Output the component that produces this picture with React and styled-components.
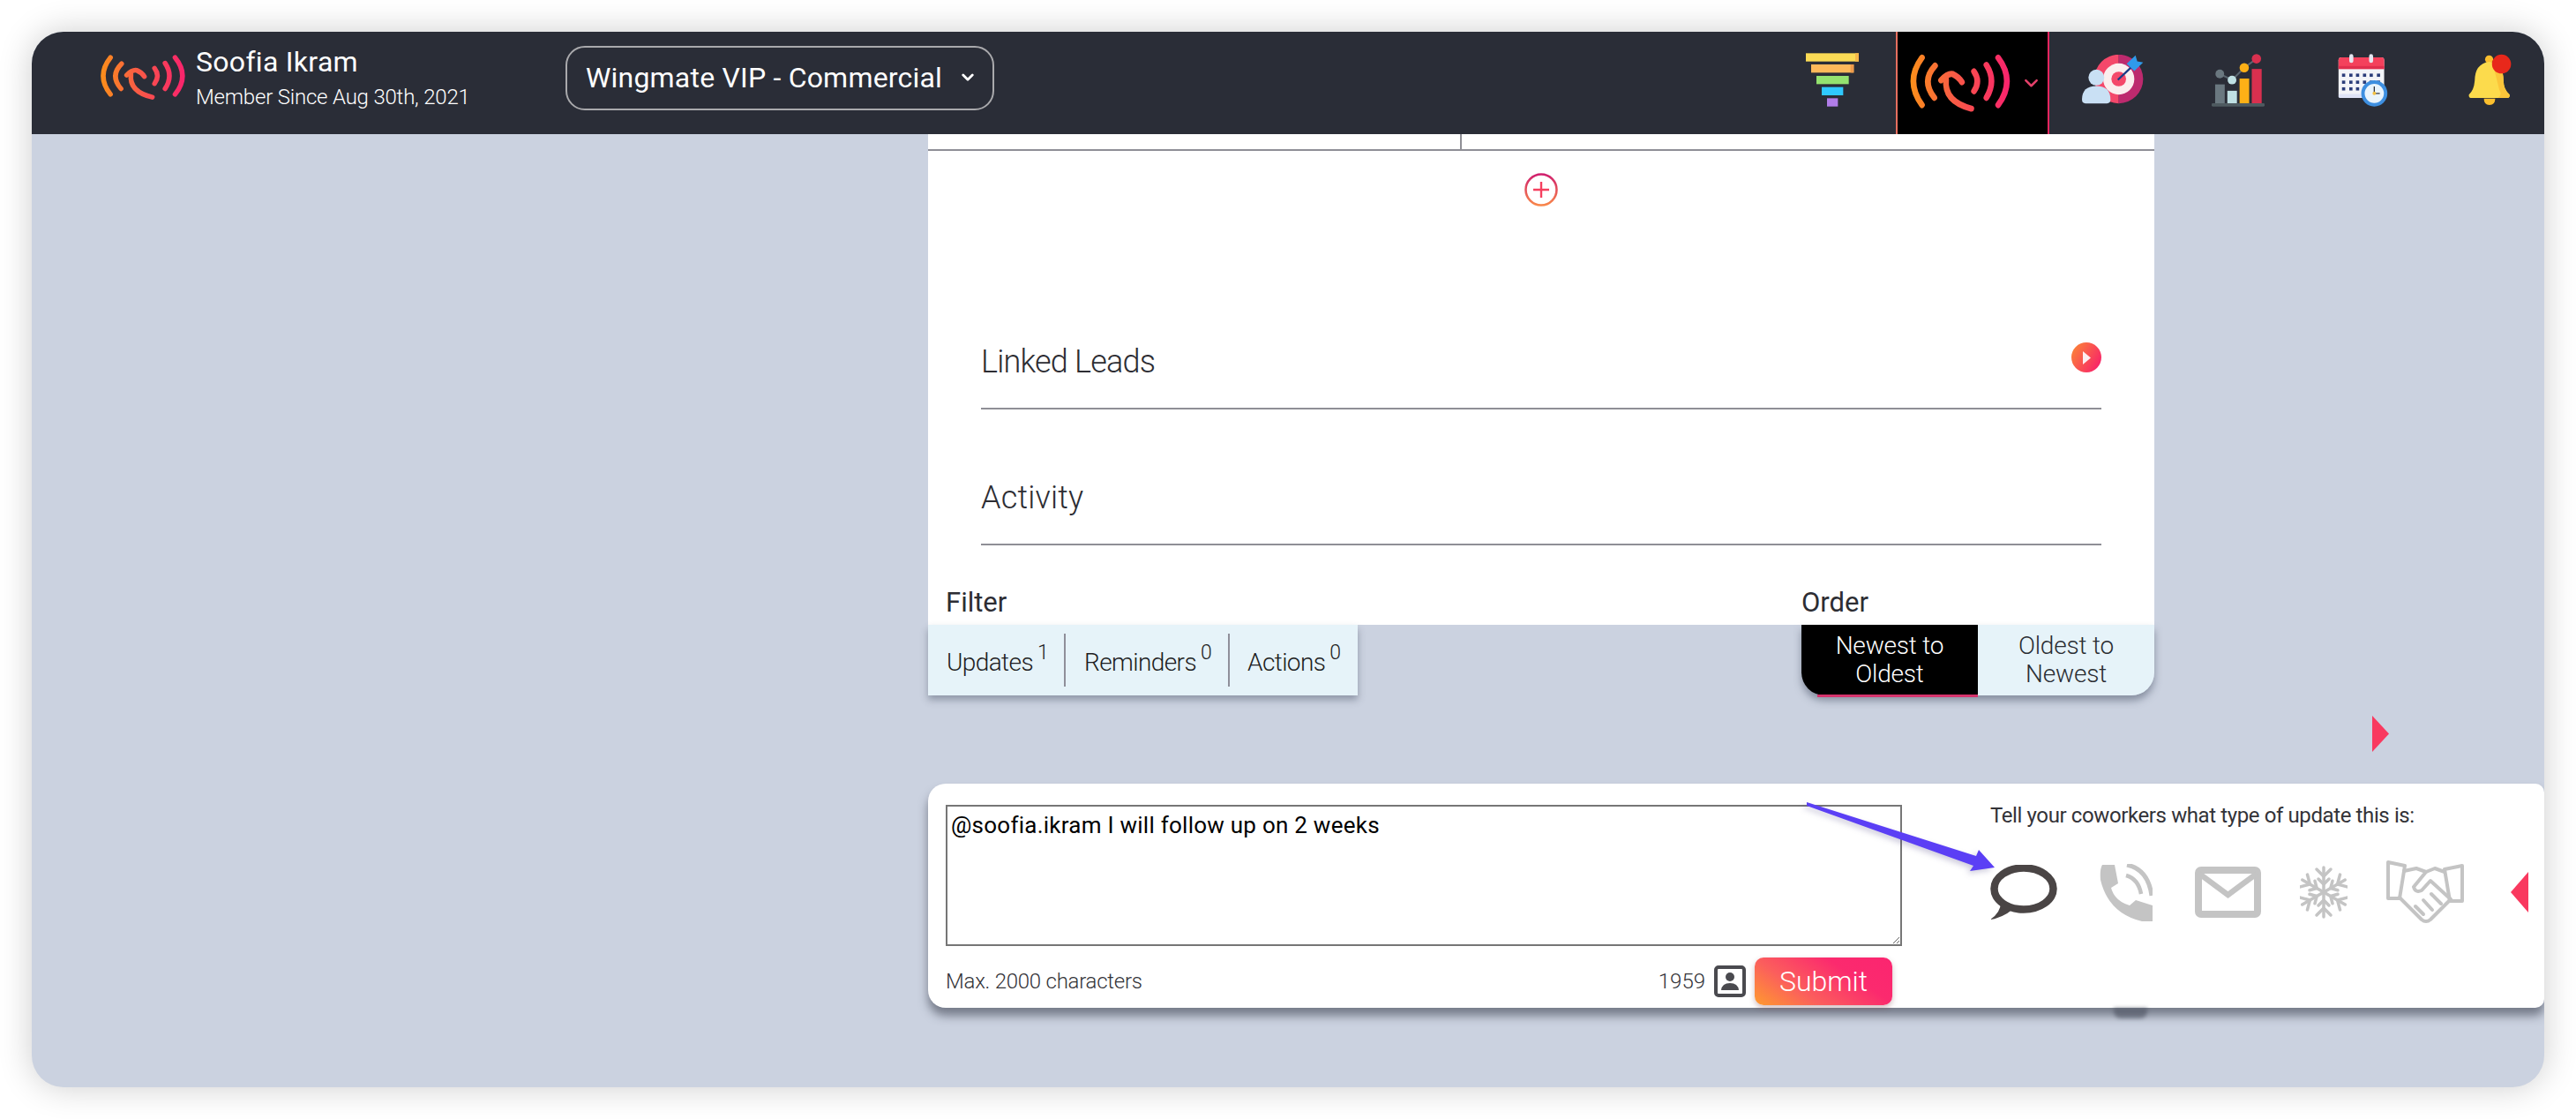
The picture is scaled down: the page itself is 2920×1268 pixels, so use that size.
import React from "react";
import styled, { createGlobalStyle } from "styled-components";

const GlobalStyle = createGlobalStyle`
  html, body {
    margin: 0;
    padding: 0;
    background: #ffffff;
    font-family: Roboto, "Liberation Sans", sans-serif;
  }
  * {
    box-sizing: border-box;
  }
`;

const Page = styled.div`
  padding: 36px;
  height: 1268px;
  overflow: hidden;
`;

const AppWindow = styled.div`
  position: relative;
  height: 1196px;
  border-radius: 36px;
  overflow: hidden;
  background: #cbd2e0;
  box-shadow: 0 0 38px rgba(0, 0, 0, 0.2);
`;

const Header = styled.header`
  display: flex;
  align-items: center;
  height: 116px;
  padding-left: 76px;
  padding-right: 37px;
  background: #2a2d37;
  color: #ffffff;
`;

const Identity = styled.div`
  display: flex;
  align-items: center;
  gap: 10px;
  width: 529px;
  padding-bottom: 14px;
`;

const UserName = styled.div`
  font-size: 32px;
  line-height: 38px;
  letter-spacing: 0.3px;
`;

const MemberSince = styled.div`
  margin-top: 7px;
  font-size: 24px;
  line-height: 28px;
  font-weight: 300;
  letter-spacing: -0.2px;
`;

const WorkspaceSelect = styled.div`
  display: flex;
  align-items: center;
  justify-content: space-between;
  width: 486px;
  height: 73px;
  margin-top: -12px;
  padding: 0 21px;
  border: 2px solid #a9a9ac;
  border-radius: 22px;
  font-size: 32px;
  letter-spacing: 0.2px;
`;

const Nav = styled.nav`
  display: flex;
  align-items: center;
  align-self: stretch;
  margin-left: auto;
`;

const NavIcon = styled.div`
  display: flex;
  margin-left: ${(p) => p.$gap}px;
  margin-top: ${(p) => p.$top || -7}px;
`;

const ActiveNav = styled.div`
  display: flex;
  align-items: center;
  align-self: stretch;
  width: 174px;
  margin-left: 42px;
  padding-left: 12px;
  gap: 13px;
  background: #000000;
  border-left: 2px solid #e76f5f;
  border-right: 2px solid #e5265f;
`;

const Main = styled.main`
  padding-left: 1016px;
`;

const Column = styled.div`
  width: 1390px;
`;

const WhiteSheet = styled.div`
  background: #ffffff;
  height: 556px;
`;

const TableStub = styled.div`
  display: grid;
  grid-template-columns: 605px 1fr;
  height: 19px;
  border-bottom: 2px solid #8f8f96;
`;

const StubCell = styled.div`
  border-right: 2px solid #8f8f96;
`;

const AddRow = styled.div`
  display: flex;
  justify-content: center;
  height: 139px;
  padding-top: 25px;
`;

const Section = styled.section`
  display: flex;
  align-items: flex-end;
  justify-content: space-between;
  height: 154px;
  margin: 0 60px;
  padding-bottom: 30px;
  border-bottom: 2px solid #8f8f96;
`;

const SectionTitle = styled.h2`
  margin: 0;
  font-size: 36px;
  line-height: 44px;
  font-weight: 300;
  letter-spacing: ${(p) => p.$spacing || 0}px;
  color: #2d2d33;
`;

const PlayButton = styled.div`
  display: flex;
  margin-bottom: 10px;
  width: 34px;
  height: 34px;
`;

const LabelRow = styled.div`
  display: flex;
  align-items: flex-end;
  justify-content: space-between;
  height: 88px;
  padding: 0 0 5px 20px;
`;

const Label = styled.div`
  width: ${(p) => p.$width || "auto"};
  font-size: 31px;
  line-height: 36px;
  color: #2d2d33;
`;

const TabsRow = styled.div`
  display: flex;
  justify-content: space-between;
`;

const FilterTabs = styled.div`
  display: flex;
  box-shadow: 0 5px 8px rgba(70, 80, 100, 0.45);
`;

const FilterTab = styled.div`
  position: relative;
  width: ${(p) => p.$width}px;
  height: 80px;
  padding: 23px 0 0 ${(p) => p.$pad}px;
  background: #e6f3f9;
  font-size: 28px;
  line-height: 40px;
  font-weight: 300;
  letter-spacing: -0.6px;
  color: #1d1d22;
  white-space: nowrap;

  &:not(:first-child)::before {
    content: "";
    position: absolute;
    left: -1px;
    top: 10px;
    bottom: 10px;
    width: 2px;
    background: #8f8f9a;
  }
`;

const Count = styled.sup`
  position: relative;
  top: -3px;
  margin-left: 5px;
  font-size: 23px;
  line-height: 0;
  vertical-align: super;
`;

const OrderTabs = styled.div`
  display: flex;
  width: 400px;
  height: 80px;
  border-radius: 0 0 26px 26px;
  box-shadow: 0 6px 8px rgba(70, 80, 100, 0.5);
`;

const OrderTab = styled.div`
  position: relative;
  display: flex;
  align-items: center;
  justify-content: center;
  width: 200px;
  padding: 0 30px;
  text-align: center;
  font-size: 28px;
  line-height: 32px;
  font-weight: 300;
  letter-spacing: -0.2px;
  background: ${(p) => (p.$active ? "#000000" : "#e6f3f9")};
  color: ${(p) => (p.$active ? "#ffffff" : "#2a2d33")};
  border-radius: ${(p) => (p.$active ? "0 0 0 26px" : "0 0 26px 0")};

  ${(p) =>
    p.$active &&
    `
    &::after {
      content: "";
      position: absolute;
      left: 18px;
      right: 0;
      bottom: -2px;
      height: 3px;
      background: #d6336c;
    }
  `}
`;

const PagerRow = styled.div`
  display: flex;
  justify-content: flex-end;
  margin-top: 23px;
  padding-right: 176px;
`;

const Triangle = styled.div`
  width: ${(p) => (p.$left ? 20 : 19)}px;
  height: ${(p) => (p.$left ? 46 : 41)}px;
  background: #f9395f;
  clip-path: ${(p) =>
    p.$left
      ? "polygon(100% 0, 100% 100%, 0 50%)"
      : "polygon(0 0, 100% 50%, 0 100%)"};
`;

const Composer = styled.div`
  position: relative;
  display: flex;
  height: 254px;
  margin-top: 36px;
  padding: 24px 16px 0 20px;
  background: #ffffff;
  border-radius: 20px 10px 10px 20px;
  box-shadow: 0 9px 11px rgba(60, 65, 80, 0.6);

  &::after {
    content: "";
    position: absolute;
    left: 1344px;
    bottom: -12px;
    width: 38px;
    height: 12px;
    background: rgba(70, 75, 90, 0.55);
    filter: blur(2px);
    border-radius: 0 0 8px 8px;
  }
`;

const EditorColumn = styled.div`
  display: flex;
  flex-direction: column;
  width: 1084px;
`;

const Editor = styled.textarea`
  display: block;
  width: 100%;
  height: 160px;
  padding: 5px 4px;
  border: 2px solid #767676;
  outline: none;
  resize: both;
  font-family: Roboto, "Liberation Sans", sans-serif;
  font-size: 26px;
  line-height: 32px;
  letter-spacing: 0.25px;
  color: #000000;
  background: #ffffff;
`;

const EditorFooter = styled.div`
  display: flex;
  align-items: center;
  margin-top: 12px;
  height: 56px;
  padding-right: 11px;
`;

const Hint = styled.span`
  font-size: 24px;
  font-weight: 300;
  letter-spacing: -0.25px;
  color: #333338;
`;

const Counter = styled.span`
  margin-left: auto;
  margin-right: 10px;
  font-size: 24px;
  font-weight: 300;
  color: #333338;
`;

const SubmitButton = styled.button`
  width: 156px;
  height: 54px;
  margin-left: 10px;
  border: 0;
  border-radius: 10px;
  background: linear-gradient(35deg, #ff9a2e 0%, #fb5f5c 32%, #fb2a6e 68%, #fb2570 100%);
  box-shadow: 0 3px 6px rgba(120, 60, 70, 0.35);
  color: #ffffff;
  font-family: Roboto, "Liberation Sans", sans-serif;
  font-size: 32px;
  font-weight: 300;
`;

const TypeColumn = styled.div`
  flex: 1;
  padding-left: 100px;
`;

const TypeHeading = styled.div`
  margin-top: -2px;
  font-size: 24px;
  line-height: 28px;
  letter-spacing: -0.39px;
  color: #333338;
`;

const TypeIcons = styled.div`
  display: flex;
  align-items: center;
  height: 72px;
  margin-top: 37px;
`;

const TypeIcon = styled.div`
  display: flex;
  margin-left: ${(p) => p.$gap}px;
  color: ${(p) => (p.$active ? "#4a4545" : "#c4c4c4")};
`;

const Annotation = styled.svg`
  position: absolute;
  left: 2012px;
  top: 875px;
  overflow: visible;
  filter: drop-shadow(-3px 3px 3px rgba(60, 50, 120, 0.25));
`;

function SignalLogo({ id, width, height }) {
  return (
    <svg width={width} height={height} viewBox="62 75 310 165" preserveAspectRatio="none" fill="none" strokeWidth="17" strokeLinecap="round">
      <defs>
        <linearGradient id={id} gradientUnits="userSpaceOnUse" x1="62" y1="0" x2="372" y2="0">
          <stop offset="0" stopColor="#fb9218" />
          <stop offset="0.4" stopColor="#f95f42" />
          <stop offset="1" stopColor="#f9206f" />
        </linearGradient>
      </defs>
      <g stroke={`url(#${id})`}>
        <path d="M103 88 Q52 152 103 218" />
        <path d="M142 110 Q100 152 140 198" />
        <path d="M160 150 Q180 130 195 133 Q212 140 222 155" />
        <path d="M175 148 Q168 208 250 228" />
        <path d="M258 126 Q278 152 258 180" />
        <path d="M295 108 Q325 152 295 198" />
        <path d="M330 88 Q382 152 330 218" />
      </g>
    </svg>
  );
}

function Chevron({ color, width, height, strokeWidth }) {
  return (
    <svg width={width} height={height} viewBox="0 0 12 8" fill="none" stroke={color} strokeWidth={strokeWidth} strokeLinecap="round" strokeLinejoin="round">
      <path d="M1.5 1.5 L6 6 L10.5 1.5" />
    </svg>
  );
}

function FunnelIcon() {
  return (
    <svg width="60" height="61" viewBox="50 110 180 181">
      <rect x="50" y="110" width="180" height="28" fill="#fbdb55" />
      <rect x="218" y="110" width="12" height="28" fill="#f7b84a" />
      <rect x="68" y="148" width="145" height="28" fill="#fdb95a" />
      <rect x="202" y="148" width="11" height="28" fill="#ee9a4c" />
      <rect x="86" y="187" width="110" height="28" fill="#94e26f" />
      <rect x="104" y="225" width="73" height="28" fill="#2fc8ff" />
      <rect x="122" y="263" width="37" height="28" fill="#b17de8" />
    </svg>
  );
}

function TargetIcon() {
  return (
    <svg width="70" height="57" viewBox="990 120 210 170">
      <path d="M1115 119 A83 83 0 0 0 1115 285 Z" fill="#f4486a" />
      <path d="M1115 119 A83 83 0 0 1 1115 285 Z" fill="#bd2a6e" />
      <circle cx="1115" cy="202" r="53" fill="#fbeeee" />
      <circle cx="1115" cy="202" r="25" fill="#f4486a" />
      <path d="M1112 205 L1165 155" stroke="#173a86" strokeWidth="7" />
      <path d="M1142 150 L1172 122 L1178 142 L1198 146 L1168 175 Z" fill="#2f9aea" />
      <circle cx="1039" cy="197" r="27" fill="#c9e0f4" />
      <path d="M990 272 Q990 226 1039 226 Q1087 226 1087 272 Q1087 285 1075 285 L1002 285 Q990 285 990 272 Z" fill="#c9e0f4" />
    </svg>
  );
}

function ChartIcon() {
  return (
    <svg width="60" height="60" viewBox="170 80 182 182">
      <path d="M198 149 L240 170 L282 128 L324 97" stroke="#5a6670" strokeWidth="6" fill="none" />
      <rect x="182" y="185" width="33" height="65" fill="#6a7880" />
      <rect x="224" y="207" width="33" height="43" fill="#bfe0e3" />
      <rect x="266" y="165" width="33" height="85" fill="#fdb016" />
      <rect x="308" y="132" width="34" height="118" fill="#d9304f" />
      <rect x="170" y="250" width="182" height="11" rx="4" fill="#4e5a60" />
      <circle cx="198" cy="149" r="15" fill="#6a7880" />
      <circle cx="240" cy="170" r="15" fill="#bfe0e3" />
      <circle cx="282" cy="128" r="16" fill="#fdb016" />
      <circle cx="324" cy="97" r="16" fill="#d9304f" />
    </svg>
  );
}

function CalendarIcon() {
  const rows = [148, 172, 195];
  const cols = [615, 640, 663, 687, 710, 735];
  return (
    <svg width="57" height="60" viewBox="601 80 172 182">
      <rect x="603" y="92" width="157" height="140" rx="10" fill="#f3f4f8" />
      <rect x="603" y="218" width="157" height="14" rx="6" fill="#dfe3f7" />
      <path d="M603 132 V102 Q603 92 613 92 H750 Q760 92 760 102 V132 Z" fill="#f4415c" />
      <rect x="603" y="122" width="157" height="10" fill="#e12f4e" />
      <rect x="640" y="81" width="14" height="30" rx="7" fill="#e5e6f0" />
      <rect x="708" y="81" width="14" height="30" rx="7" fill="#e5e6f0" />
      {rows.map((y) =>
        cols.map((x) => <rect key={`${x}-${y}`} x={x} y={y} width="11" height="11" fill="#2b3d7a" />)
      )}
      <circle cx="726" cy="216" r="45" fill="#3e8fe0" />
      <circle cx="726" cy="216" r="33" fill="#eaf4fc" />
      <path d="M726 192 V216 H745" stroke="#33363f" strokeWidth="4" fill="none" />
      <circle cx="726" cy="216" r="6" fill="#f2c043" />
    </svg>
  );
}

function BellIcon() {
  return (
    <svg width="49" height="59" viewBox="1043 72 150 178">
      <circle cx="1115" cy="90" r="14" fill="#fbbf2e" />
      <path d="M1097 226 H1136 Q1136 248 1116 248 Q1097 248 1097 226 Z" fill="#fbbf2e" />
      <path d="M1115 98 Q1065 105 1065 165 Q1062 198 1045 212 Q1043 224 1055 224 H1175 Q1188 224 1186 212 Q1165 195 1165 165 Q1165 105 1115 98 Z" fill="#fcdb4c" />
      <path d="M1125 100 Q1165 110 1165 165 Q1165 195 1186 212 Q1188 224 1175 224 H1145 Q1162 215 1150 195 Q1140 150 1125 100 Z" fill="#fbc53a" />
      <circle cx="1158" cy="106" r="33" fill="#e8281b" />
    </svg>
  );
}

function PlusCircle() {
  return (
    <svg width="38" height="38" viewBox="0 0 38 38" fill="none">
      <defs>
        <linearGradient id="plusRing" x1="0.5" y1="0" x2="0.5" y2="1">
          <stop offset="0" stopColor="#d01f6e" />
          <stop offset="1" stopColor="#f8864a" />
        </linearGradient>
      </defs>
      <circle cx="19" cy="19" r="17.5" stroke="url(#plusRing)" strokeWidth="2.6" />
      <path d="M19 10 V28 M10 19 H28" stroke="#f5405f" strokeWidth="2.4" />
    </svg>
  );
}

function PlayIcon() {
  return (
    <svg width="34" height="34" viewBox="0 0 34 34">
      <defs>
        <linearGradient id="playFill" x1="0" y1="0.2" x2="1" y2="0.8">
          <stop offset="0" stopColor="#fb8338" />
          <stop offset="1" stopColor="#f81f6b" />
        </linearGradient>
      </defs>
      <circle cx="17" cy="17" r="17" fill="url(#playFill)" />
      <path d="M13 10 L22 17.500 L13 25 Z" fill="#fdeef0" />
    </svg>
  );
}

function ContactIcon() {
  return (
    <svg width="36" height="36" viewBox="0 0 36 36">
      <rect x="2" y="2" width="32" height="32" rx="3" fill="none" stroke="#4a4a4f" strokeWidth="4" />
      <circle cx="18" cy="13" r="5" fill="#4a4a4f" />
      <path d="M8 28 Q9 20 18 20 Q27 20 28 28 Z" fill="#4a4a4f" />
    </svg>
  );
}

function CommentIcon() {
  return (
    <svg width="76" height="62" viewBox="0 0 76 62">
      <ellipse cx="38" cy="27" rx="33.500" ry="23.500" fill="none" stroke="currentColor" strokeWidth="8.500" />
      <path d="M12 42 Q12 54 0 62 Q14 60 26 50 Z" fill="currentColor" />
    </svg>
  );
}

function PhoneIcon() {
  return (
    <svg width="60" height="65" viewBox="0 0 60 65" fill="currentColor">
      <path d="M3 1 H17 L21 22 L13 27 Q17 42 34 47 L41 41 L60 47 V65 Q56 65 48 65 Q10 56 1 18 Q0 6 3 1 Z" />
      <path d="M31 1 Q55 6 59 36" fill="none" stroke="currentColor" strokeWidth="5" />
      <path d="M30 13 Q44 17 47 34" fill="none" stroke="currentColor" strokeWidth="4.500" />
    </svg>
  );
}

function MailIcon() {
  return (
    <svg width="75" height="58" viewBox="0 0 75 58" fill="none" stroke="currentColor">
      <rect x="4" y="4" width="67" height="50" rx="3" strokeWidth="8" />
      <path d="M5 8 L37.500 32 L70 8" strokeWidth="6.500" />
    </svg>
  );
}

function SnowflakeIcon() {
  const arms = [0, 60, 120, 180, 240, 300];
  return (
    <svg width="54" height="60" viewBox="-27 -30 54 60" fill="none" stroke="currentColor" strokeWidth="3.500" strokeLinecap="round">
      {arms.map((angle) => (
        <g key={angle} transform={`rotate(${angle})`}>
          <path d="M0 0 V-28" />
          <path d="M-8 -26 L0 -18 L8 -26" />
          <path d="M-6 -15 L0 -9 L6 -15" />
        </g>
      ))}
    </svg>
  );
}

function HandshakeIcon() {
  return (
    <svg width="88" height="72" viewBox="0 0 88 72" fill="none" stroke="currentColor" strokeWidth="4" strokeLinejoin="round" strokeLinecap="round">
      <path d="M2 2 L21 6 L15 43 L2 43 Z" />
      <path d="M86 6 L66 10 L72 46 L86 46 Z" />
      <path d="M20 12 L34 9 L45 13 L31 30 Q33 37 40 34 L50 23 L73 44" />
      <path d="M45 13 L55 9 L66 13" />
      <path d="M15 42 L40 67 Q45 71 50 67 L72 45" />
      <path d="M33 52 L42 61" />
      <path d="M42 45 L52 56" />
      <path d="M51 38 L62 49" />
    </svg>
  );
}

function UpdateArrow() {
  return (
    <Annotation width="220" height="80" viewBox="48 51 220 80">
      <polygon fill="#5b3ff5" points="48,49 240,110 243,103 261,123 233,127 237,121 48,53" />
    </Annotation>
  );
}

export default function App() {
  return (
    <Page>
      <GlobalStyle />
      <AppWindow>
        <Header>
          <Identity>
            <SignalLogo id="brandLogo" width={100} height={53} />
            <div>
              <UserName>Soofia Ikram</UserName>
              <MemberSince>Member Since Aug 30th, 2021</MemberSince>
            </div>
          </Identity>
          <WorkspaceSelect>
            Wingmate VIP - Commercial
            <Chevron color="#ffffff" width={14} height={10} strokeWidth={2.4} />
          </WorkspaceSelect>
          <Nav>
            <NavIcon $gap={0}><FunnelIcon /></NavIcon>
            <ActiveNav>
              <SignalLogo id="navLogo" width={118} height={68} />
              <Chevron color="#e5406a" width={17} height={11} strokeWidth={1.8} />
            </ActiveNav>
            <NavIcon $gap={37}><TargetIcon /></NavIcon>
            <NavIcon $gap={77}><ChartIcon /></NavIcon>
            <NavIcon $gap={83}><CalendarIcon /></NavIcon>
            <NavIcon $gap={91}><BellIcon /></NavIcon>
          </Nav>
        </Header>
        <Main>
          <Column>
            <WhiteSheet>
              <TableStub>
                <StubCell />
                <div />
              </TableStub>
              <AddRow><PlusCircle /></AddRow>
              <Section>
                <SectionTitle $spacing={-0.8}>Linked Leads</SectionTitle>
                <PlayButton><PlayIcon /></PlayButton>
              </Section>
              <Section>
                <SectionTitle $spacing={0.2}>Activity</SectionTitle>
              </Section>
              <LabelRow>
                <Label>Filter</Label>
                <Label $width="400px">Order</Label>
              </LabelRow>
            </WhiteSheet>
            <TabsRow>
              <FilterTabs>
                <FilterTab $width={155} $pad={21}>Updates<Count>1</Count></FilterTab>
                <FilterTab $width={186} $pad={22}>Reminders<Count>0</Count></FilterTab>
                <FilterTab $width={146} $pad={21}>Actions<Count>0</Count></FilterTab>
              </FilterTabs>
              <OrderTabs>
                <OrderTab $active>Newest to Oldest</OrderTab>
                <OrderTab>Oldest to Newest</OrderTab>
              </OrderTabs>
            </TabsRow>
          </Column>
          <PagerRow><Triangle /></PagerRow>
          <Composer>
            <EditorColumn>
              <Editor readOnly defaultValue="@soofia.ikram I will follow up on 2 weeks" />
              <EditorFooter>
                <Hint>Max. 2000 characters</Hint>
                <Counter>1959</Counter>
                <ContactIcon />
                <SubmitButton>Submit</SubmitButton>
              </EditorFooter>
            </EditorColumn>
            <TypeColumn>
              <TypeHeading>Tell your coworkers what type of update this is:</TypeHeading>
              <TypeIcons>
                <TypeIcon $gap={0} $active><CommentIcon /></TypeIcon>
                <TypeIcon $gap={48}><PhoneIcon /></TypeIcon>
                <TypeIcon $gap={48}><MailIcon /></TypeIcon>
                <TypeIcon $gap={44}><SnowflakeIcon /></TypeIcon>
                <TypeIcon $gap={44}><HandshakeIcon /></TypeIcon>
                <TypeIcon $gap={53}><Triangle $left /></TypeIcon>
              </TypeIcons>
            </TypeColumn>
          </Composer>
        </Main>
        <UpdateArrow />
      </AppWindow>
    </Page>
  );
}
